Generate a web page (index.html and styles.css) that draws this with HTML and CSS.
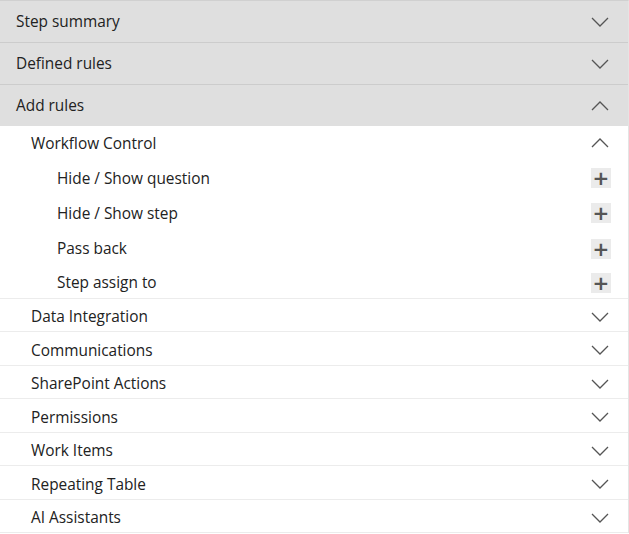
FILE: index.html
```html
<!DOCTYPE html>
<html lang="en">
<head>
    <meta charset="UTF-8">
    <title>Rules panel</title>
    <link rel="stylesheet" href="styles.css">
</head>
<body>

<div class="panel">
    <div class="head">
        <span>Step summary</span>
        <svg class="chev" viewBox="0 0 18 10"><path d="M1 1l8 8 8-8"/></svg>
    </div>
    <div class="head">
        <span>Defined rules</span>
        <svg class="chev" viewBox="0 0 18 10"><path d="M1 1l8 8 8-8"/></svg>
    </div>
    <div class="head">
        <span>Add rules</span>
        <svg class="chev" viewBox="0 0 18 10"><path d="M1 9l8-8 8 8"/></svg>
    </div>

    <div class="body">
        <div class="group open">
            <div class="group-head">
                <span>Workflow Control</span>
                <svg class="chev" viewBox="0 0 18 10"><path d="M1 9l8-8 8 8"/></svg>
            </div>
            <div class="item"><span>Hide / Show question</span><button class="add">+</button></div>
            <div class="item"><span>Hide / Show step</span><button class="add">+</button></div>
            <div class="item"><span>Pass back</span><button class="add">+</button></div>
            <div class="item"><span>Step assign to</span><button class="add">+</button></div>
        </div>
        <div class="group">
            <div class="group-head"><span>Data Integration</span><svg class="chev" viewBox="0 0 18 10"><path d="M1 1l8 8 8-8"/></svg></div>
        </div>
        <div class="group">
            <div class="group-head"><span>Communications</span><svg class="chev" viewBox="0 0 18 10"><path d="M1 1l8 8 8-8"/></svg></div>
        </div>
        <div class="group">
            <div class="group-head"><span>SharePoint Actions</span><svg class="chev" viewBox="0 0 18 10"><path d="M1 1l8 8 8-8"/></svg></div>
        </div>
        <div class="group">
            <div class="group-head"><span>Permissions</span><svg class="chev" viewBox="0 0 18 10"><path d="M1 1l8 8 8-8"/></svg></div>
        </div>
        <div class="group">
            <div class="group-head"><span>Work Items</span><svg class="chev" viewBox="0 0 18 10"><path d="M1 1l8 8 8-8"/></svg></div>
        </div>
        <div class="group">
            <div class="group-head"><span>Repeating Table</span><svg class="chev" viewBox="0 0 18 10"><path d="M1 1l8 8 8-8"/></svg></div>
        </div>
        <div class="group">
            <div class="group-head"><span>AI Assistants</span><svg class="chev" viewBox="0 0 18 10"><path d="M1 1l8 8 8-8"/></svg></div>
        </div>
    </div>
</div>

</body>
</html>
```

FILE: styles.css
```css
body {
    margin: 0;
    font-family: 'Open Sans', 'Noto Sans', sans-serif;
    font-size: 15.4px;
    color: #222;
    background: #fff;
}
.panel {
    width: 628px;
    border-top: 1px solid #d0d0d0;
    border-right: 1px solid #e4e4e4;
}
.head {
    display: flex;
    align-items: center;
    justify-content: space-between;
    height: 41px;
    padding: 0 19px 0 16px;
    background: #dfdfdf;
    border-bottom: 1px solid #cccccc;
}
.head:nth-child(3) {
    border-bottom: none;
}
.chev {
    width: 18px;
    height: 10px;
    fill: none;
    stroke: #555;
    stroke-width: 1.3;
}
.group {
    border-bottom: 1px solid #ececec;
}
.group-head {
    box-sizing: border-box;
    display: flex;
    align-items: center;
    justify-content: space-between;
    height: 32.5px;
    padding: 3px 19px 0 31px;
}
.group.open .group-head {
    height: 34px;
    padding-top: 0;
}
.item {
    box-sizing: border-box;
    display: flex;
    align-items: center;
    justify-content: space-between;
    height: 35.3px;
    padding: 1px 17px 0 57px;
}
.item:last-child {
    height: 32px;
    padding-top: 2px;
}
.add {
    width: 20px;
    height: 20px;
    padding: 0;
    border: none;
    background: #ebebeb;
    color: #555;
    font-family: 'DejaVu Sans', sans-serif;
    font-size: 20px;
    font-weight: bold;
    line-height: 20px;
    cursor: pointer;
}
```
